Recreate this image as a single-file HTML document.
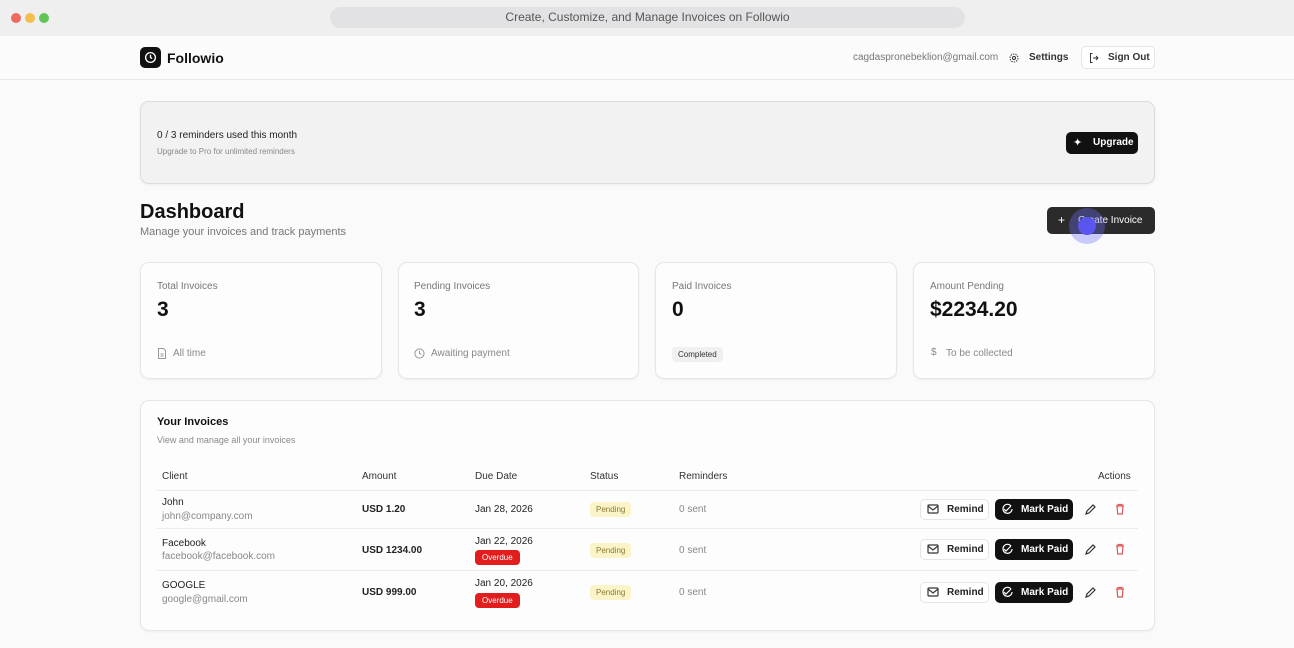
<!DOCTYPE html>
<html><head><meta charset="utf-8"><style>
*{box-sizing:border-box;margin:0;padding:0}
body{width:1294px;height:648px;overflow:hidden;background:#fafafa;font-family:"Liberation Sans",Arial,sans-serif;color:#111;position:relative}
.a{position:absolute}
.top{left:0;top:0;width:1294px;height:36px;background:#efeff0}
.dot{width:10px;height:10px;border-radius:50%;top:13px}
.url{left:330px;top:7px;width:635px;height:21px;border-radius:11px;background:#e2e2e4;text-align:center;font-size:12px;line-height:21px;color:#555}
.hdr{left:0;top:36px;width:1294px;height:44px;border-bottom:1px solid #e8e8e8;background:#fbfbfb}
.card{background:#fdfdfd;border:1px solid #e6e6e6;border-radius:9px;box-shadow:0 1px 2px rgba(0,0,0,.05)}
.lbl{font-size:10px;color:#777}
.big{font-size:21px;font-weight:bold}
.sub{font-size:10px;color:#888}
.th{font-size:10px;color:#333;top:471px}
.line{left:157px;width:981px;height:1px;background:#ececec}
.t1{font-size:10px;color:#222}
.t2{font-size:10px;color:#888}
.pend{font-size:8px;color:#8a7a30;background:#fbf4c8;border-radius:4px;padding:3px 6px}
.over{font-size:8px;color:#fff;background:#e11d1d;border-radius:4px;padding:3px 7px}
.rb{width:69px;height:21px;border:1px solid #e5e5e5;border-radius:5px;background:#fff;font-size:10px;line-height:19px;padding-left:26px;font-weight:bold;color:#222}
.mb{width:78px;height:21px;border-radius:5px;background:#111;color:#fff;font-size:10px;line-height:21px;padding-left:26px;font-weight:bold}
</style></head><body>
<div class="a top"></div>
<div class="a dot" style="left:11px;background:#ed6a5e"></div>
<div class="a dot" style="left:25px;background:#f5bf4f"></div>
<div class="a dot" style="left:39px;background:#61c554"></div>
<div class="a url">Create, Customize, and Manage Invoices on Followio</div>
<div class="a hdr"></div>
<div class="a" style="left:140px;top:47px;width:21px;height:21px;border-radius:5px;background:#111"></div>
<svg class="a" style="left:144px;top:51px" width="13" height="13" viewBox="0 0 24 24" fill="none" stroke="#fff" stroke-width="2.5"><circle cx="12" cy="12" r="9"/><path d="M12 7v5l3 2"/></svg>
<div class="a" style="left:167px;top:50px;font-size:14px;font-weight:bold">Followio</div>
<div class="a" style="left:853px;top:52px;font-size:10px;color:#777">cagdaspronebeklion@gmail.com</div>
<svg class="a" style="left:1008px;top:52px" width="12" height="12" viewBox="0 0 24 24" fill="none" stroke="#333" stroke-width="2"><circle cx="12" cy="12" r="3"/><circle cx="12" cy="12" r="8" stroke-dasharray="3 2"/></svg>
<div class="a" style="left:1029px;top:52px;font-size:10px;font-weight:bold;color:#333">Settings</div>
<div class="a" style="left:1081px;top:46px;width:74px;height:23px;border:1px solid #e5e5e5;border-radius:5px;background:#fff"></div>
<svg class="a" style="left:1088px;top:52px" width="12" height="12" viewBox="0 0 24 24" fill="none" stroke="#333" stroke-width="2"><path d="M9 3H5v18h4M10 12h10M16 8l4 4-4 4"/></svg>
<div class="a" style="left:1108px;top:52px;font-size:10px;font-weight:bold;color:#333">Sign Out</div>

<div class="a" style="left:140px;top:101px;width:1015px;height:83px;background:#f2f2f2;border:1px solid #dcdcdc;border-radius:9px;box-shadow:0 1px 3px rgba(0,0,0,.06)"></div>
<div class="a" style="left:157px;top:130px;font-size:10px;color:#222">0 / 3 reminders used this month</div>
<div class="a" style="left:157px;top:147px;font-size:8px;color:#888">Upgrade to Pro for unlimited reminders</div>
<div class="a" style="left:1066px;top:132px;width:72px;height:22px;border-radius:5px;background:#111;color:#fff;font-size:10px;font-weight:bold;line-height:22px;padding-left:27px">Upgrade</div>
<div class="a" style="left:1073px;top:136px;color:#fff;font-size:11px">✦</div>

<div class="a" style="left:140px;top:201px;font-size:20px;font-weight:bold">Dashboard</div>
<div class="a" style="left:140px;top:226px;font-size:11px;color:#777">Manage your invoices and track payments</div>
<div class="a" style="left:1047px;top:207px;width:108px;height:27px;border-radius:5px;background:#2b2b2b;color:#fff;font-size:10px;line-height:27px;padding-left:31px">Create Invoice</div>
<div class="a" style="left:1058px;top:213px;color:#fff;font-size:12px">+</div>
<div class="a" style="left:1069px;top:208px;width:36px;height:36px;border-radius:50%;background:rgba(110,110,255,.35)"></div>
<div class="a" style="left:1078px;top:217px;width:18px;height:18px;border-radius:50%;background:#5a55ee"></div>

<div class="a card" style="left:140px;top:262px;width:242px;height:117px"></div>
<div class="a card" style="left:398px;top:262px;width:241px;height:117px"></div>
<div class="a card" style="left:655px;top:262px;width:242px;height:117px"></div>
<div class="a card" style="left:913px;top:262px;width:242px;height:117px"></div>
<div class="a lbl" style="left:157px;top:281px">Total Invoices</div>
<div class="a lbl" style="left:414px;top:281px">Pending Invoices</div>
<div class="a lbl" style="left:672px;top:281px">Paid Invoices</div>
<div class="a lbl" style="left:930px;top:281px">Amount Pending</div>
<div class="a big" style="left:157px;top:298px">3</div>
<div class="a big" style="left:414px;top:298px">3</div>
<div class="a big" style="left:672px;top:298px">0</div>
<div class="a big" style="left:930px;top:298px">$2234.20</div>
<svg class="a" style="left:157px;top:348px" width="10" height="11" viewBox="0 0 20 22" fill="none" stroke="#999" stroke-width="2"><path d="M3 1h10l4 4v16H3zM7 12h6M7 16h6"/></svg>
<div class="a sub" style="left:173px;top:348px">All time</div>
<svg class="a" style="left:414px;top:348px" width="11" height="11" viewBox="0 0 24 24" fill="none" stroke="#999" stroke-width="2.2"><circle cx="12" cy="12" r="10"/><path d="M12 6v6l4 2"/></svg>
<div class="a sub" style="left:431px;top:348px">Awaiting payment</div>
<div class="a" style="left:672px;top:347px;font-size:8px;background:#f0f0f0;border-radius:4px;padding:3px 6px;color:#333">Completed</div>
<div class="a sub" style="left:931px;top:347px">$</div>
<div class="a sub" style="left:946px;top:348px">To be collected</div>

<div class="a card" style="left:140px;top:400px;width:1015px;height:231px"></div>
<div class="a" style="left:157px;top:416px;font-size:11px;font-weight:bold">Your Invoices</div>
<div class="a" style="left:157px;top:435px;font-size:9px;color:#888">View and manage all your invoices</div>
<div class="a th" style="left:162px">Client</div>
<div class="a th" style="left:362px">Amount</div>
<div class="a th" style="left:475px">Due Date</div>
<div class="a th" style="left:590px">Status</div>
<div class="a th" style="left:679px">Reminders</div>
<div class="a th" style="left:1098px">Actions</div>
<div class="a line" style="top:490px"></div>
<div class="a line" style="top:528px"></div>
<div class="a line" style="top:570px"></div>

<div class="a t1" style="left:162px;top:497px">John</div>
<div class="a t2" style="left:162px;top:511px">john@company.com</div>
<div class="a t1" style="left:362px;top:504px;font-weight:bold">USD 1.20</div>
<div class="a t1" style="left:475px;top:504px">Jan 28, 2026</div>
<div class="a pend" style="left:590px;top:502px">Pending</div>
<div class="a t2" style="left:679px;top:504px">0 sent</div>

<div class="a t1" style="left:162px;top:538px">Facebook</div>
<div class="a t2" style="left:162px;top:551px">facebook@facebook.com</div>
<div class="a t1" style="left:362px;top:545px;font-weight:bold">USD 1234.00</div>
<div class="a t1" style="left:475px;top:536px">Jan 22, 2026</div>
<div class="a over" style="left:475px;top:550px">Overdue</div>
<div class="a pend" style="left:590px;top:543px">Pending</div>
<div class="a t2" style="left:679px;top:545px">0 sent</div>

<div class="a t1" style="left:162px;top:580px">GOOGLE</div>
<div class="a t2" style="left:162px;top:594px">google@gmail.com</div>
<div class="a t1" style="left:362px;top:587px;font-weight:bold">USD 999.00</div>
<div class="a t1" style="left:475px;top:578px">Jan 20, 2026</div>
<div class="a over" style="left:475px;top:593px">Overdue</div>
<div class="a pend" style="left:590px;top:585px">Pending</div>
<div class="a t2" style="left:679px;top:587px">0 sent</div>

<!-- actions rows -->
<div class="a rb" style="left:920px;top:499px">Remind</div>
<div class="a mb" style="left:995px;top:499px">Mark Paid</div>
<div class="a rb" style="left:920px;top:539px">Remind</div>
<div class="a mb" style="left:995px;top:539px">Mark Paid</div>
<div class="a rb" style="left:920px;top:582px">Remind</div>
<div class="a mb" style="left:995px;top:582px">Mark Paid</div>
<svg class="a" style="left:0;top:0" width="1294" height="648" fill="none">
<g stroke="#333" stroke-width="1.2">
<rect x="928" y="505" width="10" height="8" rx="1"/><path d="M928 506l5 4 5-4"/>
<rect x="928" y="545" width="10" height="8" rx="1"/><path d="M928 546l5 4 5-4"/>
<rect x="928" y="588" width="10" height="8" rx="1"/><path d="M928 589l5 4 5-4"/>
<path d="M1086 514l1-3 6-6 2 2-6 6z"/><path d="M1086 554l1-3 6-6 2 2-6 6z"/><path d="M1086 597l1-3 6-6 2 2-6 6z"/>
</g>
<g stroke="#fff" stroke-width="1.2">
<path d="M1011 506a4.5 4.5 0 1 0 1 3"/><path d="M1004 509l2 2 5-5"/>
<path d="M1011 546a4.5 4.5 0 1 0 1 3"/><path d="M1004 549l2 2 5-5"/>
<path d="M1011 589a4.5 4.5 0 1 0 1 3"/><path d="M1004 592l2 2 5-5"/>
</g>
<g stroke="#e05555" stroke-width="1.2">
<path d="M1116 506h8M1118 506v-1.5h4v1.5M1117 506l.7 8h4.6l.7-8"/>
<path d="M1116 546h8M1118 546v-1.5h4v1.5M1117 546l.7 8h4.6l.7-8"/>
<path d="M1116 589h8M1118 589v-1.5h4v1.5M1117 589l.7 8h4.6l.7-8"/>
</g>
</svg>
</body></html>
